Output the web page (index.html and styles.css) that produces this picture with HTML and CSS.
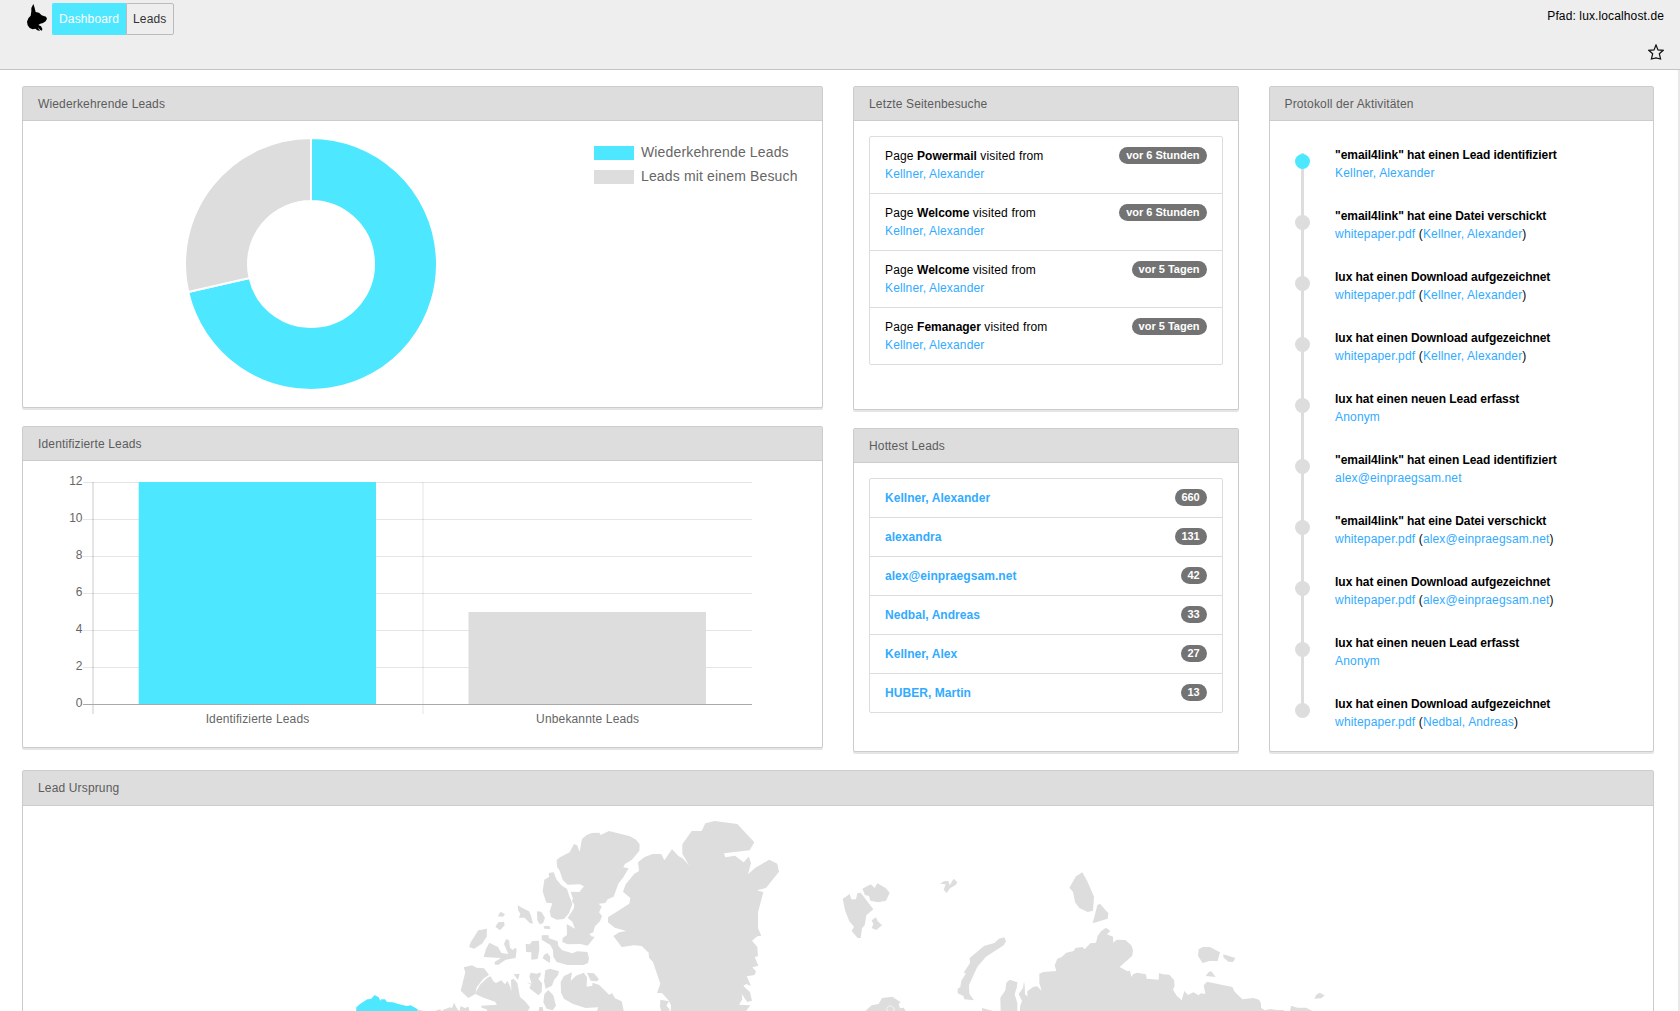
FILE: index.html
```html
<!DOCTYPE html>
<html lang="de">
<head>
<meta charset="utf-8">
<title>Lux Dashboard</title>
<link rel="stylesheet" href="styles.css">
</head>
<body>
<header class="docheader">
  <div class="docheader-row">
    <div class="docheader-left">
      <svg class="logo" viewBox="0 0 60 81" aria-hidden="true"><path d="M19 0L22 8 26 24 36 26 44 34 57 38 60 44 56 52 48 57 40 59 34 63 42 67 46 74 45 80 40 78 32 69 36 76 39 81 31 79 25 74 17 76 8 72 2 64 0 53 4 43 11 35 13 22 13 12Z"/></svg>
      <nav class="tabs">
        <a class="tab tab-active">Dashboard</a>
        <a class="tab">Leads</a>
      </nav>
    </div>
    <div class="path">Pfad: lux.localhost.de</div>
  </div>
  <div class="docheader-tools">
    <svg class="star" viewBox="0 0 16 16" aria-hidden="true"><path d="M8 1L10 5.9 15.2 6.3 11.3 9.7 12.6 15 8 13.8 3.4 15 4.7 9.7 .8 6.3 6 5.9Z"/></svg>
  </div>
</header>
<main class="module">
  <div class="grid">
    <div class="column">
      <section class="panel">
        <h2 class="panel-heading">Wiederkehrende Leads</h2>
        <div class="panel-body">
          <svg class="chart" viewBox="38 136 769 256">
            <g class="slices" transform="translate(311 264)">
              <path class="cyan" d="M0 -126A126 126 0 1 1 -122.84 28.04L-61.42 14.02A63 63 0 1 0 0 -63Z"/>
              <path class="grey" d="M-122.84 28.04A126 126 0 0 1 0 -126L0 -63A63 63 0 0 0 -61.42 14.02Z"/>
            </g>
            <rect class="cyan" x="594" y="146" width="40" height="14"/>
            <rect class="grey" x="594" y="170" width="40" height="14"/>
            <text class="legend" x="641" y="157">Wiederkehrende Leads</text>
            <text class="legend" x="641" y="181">Leads mit einem Besuch</text>
          </svg>
        </div>
      </section>
      <section class="panel">
        <h2 class="panel-heading">Identifizierte Leads</h2>
        <div class="panel-body">
          <svg class="chart" viewBox="38 476 769 256">
            <path class="gridline" d="M83 482.5H752M83 519.5H752M83 556.5H752M83 593.5H752M83 630.5H752M83 667.5H752M423 482V714"/>
            <path class="gridline axis" d="M93 482V714"/>
            <rect class="cyan" x="138.7" y="482" width="237.3" height="222"/>
            <rect class="grey" x="468.5" y="612" width="237.5" height="92"/>
            <path class="zeroline" d="M83 704.5H752"/>
            <g class="ticks">
              <text x="82.5" y="485">12</text>
              <text x="82.5" y="522">10</text>
              <text x="82.5" y="559">8</text>
              <text x="82.5" y="596">6</text>
              <text x="82.5" y="633">4</text>
              <text x="82.5" y="670">2</text>
              <text x="82.5" y="707">0</text>
            </g>
            <g class="categories">
              <text x="257.5" y="723">Identifizierte Leads</text>
              <text x="587.7" y="723">Unbekannte Leads</text>
            </g>
          </svg>
        </div>
      </section>
    </div>
    <div class="column">
      <section class="panel">
        <h2 class="panel-heading">Letzte Seitenbesuche</h2>
        <div class="panel-body">
          <ul class="list">
            <li><div>Page <b>Powermail</b> visited from<br><a>Kellner, Alexander</a></div><span class="badge">vor 6 Stunden</span></li>
            <li><div>Page <b>Welcome</b> visited from<br><a>Kellner, Alexander</a></div><span class="badge">vor 6 Stunden</span></li>
            <li><div>Page <b>Welcome</b> visited from<br><a>Kellner, Alexander</a></div><span class="badge">vor 5 Tagen</span></li>
            <li><div>Page <b>Femanager</b> visited from<br><a>Kellner, Alexander</a></div><span class="badge">vor 5 Tagen</span></li>
          </ul>
        </div>
      </section>
      <section class="panel">
        <h2 class="panel-heading">Hottest Leads</h2>
        <div class="panel-body">
          <ul class="list list-scores">
            <li><a><b>Kellner, Alexander</b></a><span class="badge">660</span></li>
            <li><a><b>alexandra</b></a><span class="badge">131</span></li>
            <li><a><b>alex@einpraegsam.net</b></a><span class="badge">42</span></li>
            <li><a><b>Nedbal, Andreas</b></a><span class="badge">33</span></li>
            <li><a><b>Kellner, Alex</b></a><span class="badge">27</span></li>
            <li><a><b>HUBER, Martin</b></a><span class="badge">13</span></li>
          </ul>
        </div>
      </section>
    </div>
    <div class="column">
      <section class="panel">
        <h2 class="panel-heading">Protokoll der Aktivitäten</h2>
        <div class="panel-body">
          <ol class="timeline">
            <li><b>"email4link" hat einen Lead identifiziert</b><br><a>Kellner, Alexander</a></li>
            <li><b>"email4link" hat eine Datei verschickt</b><br><a>whitepaper.pdf</a> (<a>Kellner, Alexander</a>)</li>
            <li><b>lux hat einen Download aufgezeichnet</b><br><a>whitepaper.pdf</a> (<a>Kellner, Alexander</a>)</li>
            <li><b>lux hat einen Download aufgezeichnet</b><br><a>whitepaper.pdf</a> (<a>Kellner, Alexander</a>)</li>
            <li><b>lux hat einen neuen Lead erfasst</b><br><a>Anonym</a></li>
            <li><b>"email4link" hat einen Lead identifiziert</b><br><a>alex@einpraegsam.net</a></li>
            <li><b>"email4link" hat eine Datei verschickt</b><br><a>whitepaper.pdf</a> (<a>alex@einpraegsam.net</a>)</li>
            <li><b>lux hat einen Download aufgezeichnet</b><br><a>whitepaper.pdf</a> (<a>alex@einpraegsam.net</a>)</li>
            <li><b>lux hat einen neuen Lead erfasst</b><br><a>Anonym</a></li>
            <li><b>lux hat einen Download aufgezeichnet</b><br><a>whitepaper.pdf</a> (<a>Nedbal, Andreas</a>)</li>
          </ol>
        </div>
      </section>
    </div>
  </div>
  <section class="panel panel-map">
    <h2 class="panel-heading">Lead Ursprung</h2>
    <div class="panel-body">
      <svg class="map" viewBox="38 820 1600 191">
        <!-- Alaska and the Canadian archipelago -->
        <g transform="translate(340 810) scale(.33333)">
          <path class="cyan" d="M48 610L49 592 60 582 82 568 93 567 104 555 116 562 121 572 124 568 135 568 141 576 158 577 178 583 200 588 212 586 233 598V610Z"/>
          <path class="grey" d="M233 598L250 603V610H233ZM284 603L300 598 305 603ZM306 610L308 600 330 592 336 594 342 578 350 594 358 604 362 588 374 594 386 590 390 610Z"/>
          <path class="grey" d="M371 472L396 466 410 473 432 475 447 494 430 506 410 532 406 552 385 564 362 542 376 487Z"/>
          <path class="grey" d="M387 411L393 395 415 361 441 356 440 380 426 401 402 416ZM466 350L475 337 492 335 494 346 480 361ZM473 319L482 305 495 313 489 320ZM533 286L546 293 567 304 573 317 579 341 569 339 554 323 537 323 541 311 535 302ZM591 304L604 305 615 323 609 340 599 343 592 331ZM610 350L618 347 629 349 631 357 614 356Z"/>
          <path class="grey" d="M431 441L438 417 448 398 474 411 484 429 505 432 492 402 498 388 507 390 510 413 518 420 524 414 530 417 527 444 497 449 474 465 463 463 465 455 483 444ZM557 402L569 403 577 393 597 392 598 419 593 447 574 449 574 427 558 426ZM608 445L612 435 622 429 631 441 629 459ZM605 376L625 375 627 385 653 394 655 408 667 421 697 430 711 424 742 426 747 444 744 459 731 465 682 465 650 456 640 440 639 421 631 405 605 389Z"/>
          <path class="grey" d="M405 551L420 524 442 503 452 499 460 514 468 519 484 511 495 523 502 512 510 529 514 545 513 510 521 506 532 519 540 561 555 574 570 592 560 610H443L440 598 425 593 424 587 471 584 465 575 427 562ZM521 493L539 491 534 510ZM560 516L575 521 568 499 572 488 590 491 602 487 602 496 595 507 606 520 605 546 595 556 578 542 568 534 573 524ZM616 481L630 476 657 484 654 496 642 510 636 527 617 536 612 514ZM613 553L625 540 640 556 648 587 638 601 620 596 610 577ZM594 610L598 591 608 591 612 610Z"/>
          <path class="grey" d="M663 548L662 516 672 498 696 487 692 513 708 497 731 488 741 502 740 530 757 527 758 518 778 525 808 555 816 549 825 565 845 574 853 610H768L775 592 737 594 699 582 672 566ZM741 488L762 490 777 508 771 514 752 512Z"/>
          <path class="grey" d="M626 189L641 187 649 208 664 226 681 237 689 261 697 281 687 310 672 327 650 329 633 321 629 304 637 280 619 278 608 244 613 209 627 201Z"/>
          <path class="grey" d="M650 150L660 142 689 127 702 102 711 106 719 125 726 87 741 74 756 69 778 68 782 75 807 63 870 79 888 89 899 103 898 122 876 149 855 162 850 172 866 175 850 202 835 221 821 260 803 268 796 279 776 281 785 290 777 307 786 318 780 334 765 349 760 367 748 372 754 379 764 381 743 407 721 402 683 403 667 396 668 384 681 375 680 342 705 356 697 335 683 324 701 296 703 284 696 273 699 267 692 245 718 246 732 229 719 223 683 224 668 209 659 182 651 170Z"/>
        </g>
        <!-- Greenland and Svalbard -->
        <g transform="translate(600 810) scale(.33333)">
          <path class="grey" d="M114 157L134 141 158 132 184 132 193 151 216 118 236 139 247 144 267 166 247 131V103L275 63H305L316 40 344 33 412 42 463 97 449 121 372 130 376 142 405 137 431 157 446 140 453 159 444 193 466 173 508 149 532 161 537 185 498 234 471 241 490 247 474 307V355L484 377 472 379 456 392 472 411 474 439 464 441 475 467 457 472 468 484 464 495 440 499 453 528 438 522 430 528 450 546 456 572 442 576 425 552 427 568 417 584 451 586 433 610H212L213 586 205 570 186 549 171 549 181 521 159 456 147 443 146 428 125 408 103 406 65 411 40 378 58 367 79 363 44 353 24 337V322L88 281 91 264 69 245 77 223 103 191 117 183Z"/>
          <path class="grey" d="M181 569L207 574 199 587 209 598 207 610H185L180 590ZM728 267L749 252 754 268H768L772 250 782 248 820 298 799 316 794 346 786 355 782 384 773 384 755 363 762 350 748 334 736 304ZM787 236L812 223 824 234 832 220 857 234 869 248 858 272 834 277 811 272 807 258 795 255ZM815 331L828 322 833 333 846 346 829 360 815 354 820 343Z"/>
        </g>
        <!-- Scandinavia, Franz Josef Land, Novaya Zemlya -->
        <g transform="translate(820 850) scale(.33333)">
          <path class="grey" d="M128 490L155 466 176 462 186 444 217 440 242 457 236 462 240 475 251 473 262 490ZM360 101L372 94 385 93 389 106 401 86 412 97 407 105 390 115 380 129 371 119 377 103ZM413 417L421 411 424 392 438 370 431 368 450 339 449 324 493 287 523 279 537 266 553 262 558 274 551 286 498 320 472 350 447 405 448 431 462 451 433 448 430 438 413 430ZM486 474L517 482V490H486ZM542 490L541 443 556 421 559 398 569 389 592 397 591 410 584 433 592 460V490Z"/>
          <path class="outline" d="M206 490L199 475 210 466 223 475 218 490"/>
        </g>
        <!-- Siberia and the Arctic islands -->
        <g transform="translate(1040 850) scale(.33333)">
          <path class="grey" d="M88 113L108 79 127 67 143 96 162 140 159 182 143 186 118 174 105 157 99 125ZM158 220L172 166 180 161 205 190 203 206Z"/>
          <path class="grey" d="M-60 490V470L-54 452 -64 432 -51 414 -48 394 -46 407 -45 432 -38 440 -38 424 -21 411 -9 409 5 422 -2 399V371L10 366 49 363 44 346 52 326 64 322 79 308 101 303 106 294 127 291 134 298 151 280 168 278 173 257 184 243 198 233 211 243 201 253 219 260 220 278 230 269 256 270 274 286 279 299 277 317 239 351 262 364 270 362 274 381 280 372 292 368 318 373 320 386 356 389 357 369 369 373 388 374 402 390 404 407 399 419 410 437 425 451 433 423 444 435 460 427 476 436 482 430 496 432 491 406 501 395 577 411 584 425 607 448 640 444 657 449 663 460V473L674 481 690 477 712 480 732 480V490Z"/>
          <path class="grey" d="M474 318L476 298 488 291 510 291 540 307 533 333H508L488 339ZM550 313L586 324 579 336 565 335 550 322ZM497 378L506 366 514 364 527 381ZM823 446L829 434 839 428 854 436 844 445ZM749 490L753 467 772 473 798 473 820 484V490Z"/>
        </g>
      </svg>
    </div>
  </section>
</main>
</body>
</html>
```
FILE: styles.css
```css
* { box-sizing: border-box; }
html, body { height: 100%; margin: 0; }
body {
  display: flex;
  flex-direction: column;
  overflow: hidden;
  background: #fff;
  color: #000;
  font: 12px/18px "Liberation Sans", Arial, sans-serif;
  letter-spacing: .15px;
}
a { color: #32abff; text-decoration: none; }
b { letter-spacing: -.03px; }
.docheader {
  flex: none;
  height: 70px;
  padding: 3px 16px 0 27px;
  background: #eee;
  border-bottom: 1px solid #c3c3c3;
}
.docheader-row, .docheader-left { display: flex; }
.docheader-row { justify-content: space-between; height: 41px; }
.logo { width: 20px; height: 27px; margin: 1px 5px 0 0; }
.tabs { display: flex; height: 32px; }
.tab {
  width: 48px;
  padding: 6px 0 0 6px;
  color: #333;
  border: 1px solid #bbb;
  border-radius: 0 2px 2px 0;
}
.tab-active {
  width: 74px;
  color: #fff;
  background: #4de8ff;
  border-color: #4de8ff;
  border-right: 0;
  border-radius: 2px 0 0 2px;
}
.path { padding-top: 4px; letter-spacing: .12px; }
.docheader-tools { display: flex; justify-content: flex-end; }
.star { width: 16px; height: 16px; fill: none; stroke: #111; stroke-width: 1.2; }
.module {
  flex: 1;
  min-height: 0;
  overflow: hidden;
  padding: 16px 24px 0 22px;
  border-right: 2px solid #e8e8e8;
}
.grid {
  display: grid;
  grid-template-columns: 801px 385.5px 385.5px;
  gap: 30px;
  height: 666px;
}
.column { display: flex; flex-direction: column; gap: 18px; }
.column:first-child .panel { height: 322px; }
.column:nth-child(2) .panel { height: 324px; }
.column:last-child .panel { height: 666px; }
.panel {
  border: 1px solid #ccc;
  border-radius: 2px;
  box-shadow: 0 2px 0 #e5e5e5;
  background: #fff;
}
.panel-heading {
  margin: 0;
  height: 34px;
  padding: 8px 15px 7px;
  background: #ddd;
  border-bottom: 1px solid #ccc;
  color: #5c5c5c;
  font-size: 12px;
  font-weight: 400;
}
.panel-body { padding: 15px; }
.panel-map { margin-top: 18px; height: 700px; }
.panel-map .panel-heading { height: 35px; }
.panel-map .panel-body { padding-top: 14px; }
.chart { display: block; width: 769px; height: 256px; overflow: visible; }
.cyan { fill: #4de8ff; }
.grey { fill: #ddd; }
.slices path { stroke: #fff; stroke-width: 2; }
.chart text { fill: #666; font-size: 12px; }
.chart .legend { font-size: 14px; }
.ticks { text-anchor: end; letter-spacing: 0; }
.categories { text-anchor: middle; }
.gridline { fill: none; stroke: rgba(0, 0, 0, .1); }
.axis { stroke-width: 2; }
.zeroline { stroke: #a9a9a9; }
.list {
  list-style: none;
  margin: 0;
  padding: 0;
  border: 1px solid #ddd;
  border-radius: 2px;
}
.list li {
  display: flex;
  justify-content: space-between;
  align-items: flex-start;
  padding: 10px 15px;
}
.list li + li { border-top: 1px solid #ddd; }
.list-scores b { letter-spacing: .05px; }
.badge {
  padding: 3px 7px;
  border-radius: 9px;
  background: #737373;
  color: #fff;
  font-size: 11px;
  line-height: 11px;
  font-weight: 700;
  letter-spacing: 0;
}
.list-scores .badge { letter-spacing: -.12px; }
.timeline { list-style: none; margin: 0; padding: 10px 0 0 16px; }
.timeline li {
  position: relative;
  height: 61px;
  padding-left: 31.6px;
  border-left: 3px solid #ddd;
}
.timeline b { letter-spacing: -.06px; }
.timeline li::before {
  content: "";
  position: absolute;
  left: -9px;
  top: 8px;
  width: 15px;
  height: 15px;
  border-radius: 50%;
  background: #ddd;
}
.timeline li:first-child::before { background: #4de8ff; }
.timeline li:first-child {
  border-image: linear-gradient(transparent 8px, #ddd 8px) 1;
  border-width: 0 0 0 3px;
}
.timeline li:last-child {
  border-image: linear-gradient(#ddd 15px, transparent 15px) 1;
  border-width: 0 0 0 3px;
}
.map { display: block; width: 1600px; height: 191px; }
.outline { fill: none; stroke: #fff; stroke-width: 2; }
```
